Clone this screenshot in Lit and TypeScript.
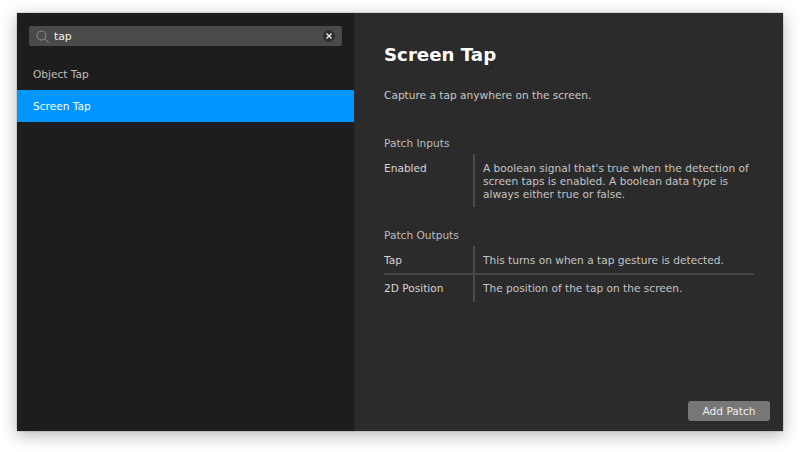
import { LitElement, html, css } from "lit";
import { customElement } from "lit/decorators.js";

@customElement("app-root")
export class AppRoot extends LitElement {
  static styles = css`
    :host { display: block; width: 800px; height: 452px; background: #fff; font-family: "DejaVu Sans", sans-serif; padding: 13px 17px 21px 17px; box-sizing: border-box; font-size: 10.6px; }
    .win { display: flex; height: 418px; box-shadow: 0 4px 16px rgba(0,0,0,.3), 0 0 1px rgba(0,0,0,.5); }
    .side { width: 337px; background: #1d1d1d; flex: none; padding-top: 13px; box-sizing: border-box; }
    .search { margin: 0 12px 0 12px; height: 20px; background: #4a4a4a; border-radius: 2px; display: flex; align-items: center; padding: 0 7px; gap: 5px; color: #f0f0f0; font-size: 10.8px; }
    .search span { flex: 1; font-weight: 400; }
    .search svg { display: block; flex: none; }
    .clear { width: 12px; height: 12px; border-radius: 50%; background: #2f2f2f; display: flex; align-items: center; justify-content: center; }
    .rows { margin-top: 12px; }
    .row { height: 32px; display: flex; align-items: center; padding: 0 0 0 16px; color: #bdbdbd; box-sizing: border-box; }
    .row.sel { background: #0096ff; color: #fff; }
    .main { flex: 1; background: #2b2b2b; display: flex; flex-direction: column; border-left: 1px solid #262626; }
    .body { flex: 1; padding: 29px 29px 0; }
    h1 { margin: 0; font-size: 18.2px; line-height: 26px; font-weight: 700; color: #fff; }
    .desc { margin: 20px 0 0; line-height: 14px; color: #c8c8c8; }
    h2 { margin: 34px 0 0; font-size: 10.6px; line-height: 14px; font-weight: 400; color: #bdbdbd; }
    .table { margin-top: 4px; }
    h2.out { margin-top: 21px; }
    .t-row { display: flex; width: 370px; }
    .t-row + .t-row { border-top: 2px solid #444; }
    .name { width: 89px; flex: none; color: #d6d6d6; padding-top: 8px; line-height: 13px; }
    .text { flex: 1; border-left: 2px solid #4a4a4a; padding: 8px 0 6px 8px; line-height: 13px; color: #c4c4c4; }
    .t-row + .t-row .name { padding-top: 7px; }
    .t-row + .t-row .text { padding-top: 7px; padding-bottom: 7px; }
    .foot { height: 41px; border-top: 1px solid #272727; display: flex; justify-content: flex-end; align-items: center; padding-right: 13px; }
    .btn { width: 82px; height: 20px; background: #777; border-radius: 3px; color: #eee; display: flex; align-items: center; justify-content: center; }
  `;
  render() {
    return html`<div class="win">
      <div class="side">
        <div class="search">
          <svg width="13" height="13" viewBox="0 0 13 13" fill="none" stroke="#8f8f8f" stroke-width="1"><circle cx="5.5" cy="5.5" r="4.5"/><path d="M8.8 8.8 12.5 12.5" stroke-linecap="round"/></svg>
          <span>tap</span>
          <div class="clear"><svg width="6" height="6" viewBox="0 0 6 6" stroke="#eee" stroke-width="1.4"><path d="M.5.5l5 5M5.5.5l-5 5"/></svg></div>
        </div>
        <div class="rows"><div class="row">Object Tap</div><div class="row sel">Screen Tap</div></div>
      </div>
      <div class="main">
        <div class="body">
          <h1>Screen Tap</h1>
          <p class="desc">Capture a tap anywhere on the screen.</p>
          <h2>Patch Inputs</h2>
          <div class="table">
            <div class="t-row"><div class="name">Enabled</div><div class="text">A boolean signal that's true when the detection of screen taps is enabled. A boolean data type is always either true or false.</div></div>
          </div>
          <h2 class="out">Patch Outputs</h2>
          <div class="table">
            <div class="t-row"><div class="name">Tap</div><div class="text">This turns on when a tap gesture is detected.</div></div>
            <div class="t-row"><div class="name">2D Position</div><div class="text">The position of the tap on the screen.</div></div>
          </div>
        </div>
        <div class="foot"><div class="btn">Add Patch</div></div>
      </div>
    </div>`;
  }
}
